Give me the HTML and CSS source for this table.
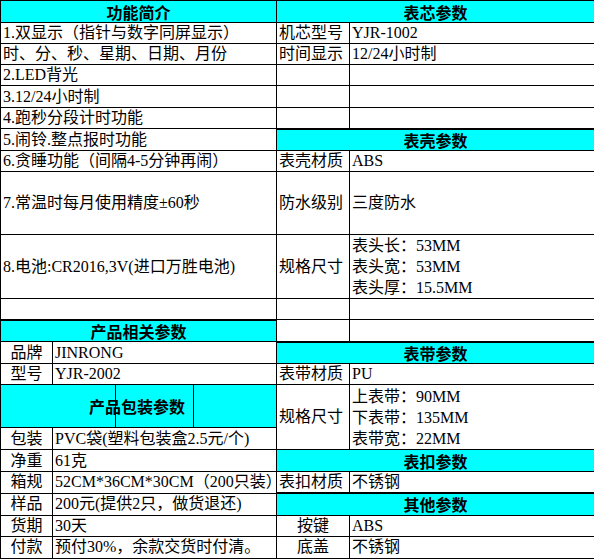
FILE: index.html
```html
<!DOCTYPE html>
<html lang="zh">
<head>
<meta charset="utf-8">
<title>产品参数</title>
<link rel="stylesheet" href="styles.css">
</head>
<body>
<table class="sheet">
  <colgroup>
    <col class="ca"><col class="cb"><col class="cc"><col class="cd"><col class="ce"><col class="cf">
  </colgroup>
  <tr class="r22"><td colspan="4" class="head">功能简介</td><td colspan="2" class="head">表芯参数</td></tr>
  <tr class="r21"><td colspan="4" class="txt">1.双显示（指针与数字同屏显示）</td><td class="lbl">机芯型号</td><td class="val">YJR-1002</td></tr>
  <tr class="r21"><td colspan="4" class="txt">时、分、秒、星期、日期、月份</td><td class="lbl">时间显示</td><td class="val">12/24小时制</td></tr>
  <tr class="r21"><td colspan="4" class="txt">2.LED背光</td><td></td><td></td></tr>
  <tr class="r22"><td colspan="4" class="txt">3.12/24小时制</td><td></td><td></td></tr>
  <tr class="r21"><td colspan="4" class="txt">4.跑秒分段计时功能</td><td></td><td></td></tr>
  <tr class="r22"><td colspan="4" class="txt">5.闹铃.整点报时功能</td><td colspan="2" class="head thick">表壳参数</td></tr>
  <tr class="r21"><td colspan="4" class="txt">6.贪睡功能（间隔4-5分钟再闹）</td><td class="lbl">表壳材质</td><td class="val">ABS</td></tr>
  <tr class="r21"><td colspan="4" rowspan="3" class="txt">7.常温时每月使用精度±60秒</td><td rowspan="3" class="lbl">防水级别</td><td rowspan="3" class="val">三度防水</td></tr>
  <tr class="r21"></tr>
  <tr class="r21"></tr>
  <tr class="r21"><td colspan="4" rowspan="3" class="txt">8.电池:CR2016,3V(进口万胜电池)</td><td rowspan="3" class="lbl">规格尺寸</td><td rowspan="3" class="val multi">表头长：53MM<br>表头宽：53MM<br>表头厚：15.5MM</td></tr>
  <tr class="r21"></tr>
  <tr class="r22"></tr>
  <tr class="r21"><td colspan="4"></td><td></td><td></td></tr>
  <tr class="r22"><td colspan="4" class="head thick">产品相关参数</td><td></td><td></td></tr>
  <tr class="r22"><td class="lbl center">品牌</td><td colspan="3" class="val">JINRONG</td><td colspan="2" class="head thick">表带参数</td></tr>
  <tr class="r21"><td class="lbl center">型号</td><td colspan="3" class="val">YJR-2002</td><td class="lbl">表带材质</td><td class="val">PU</td></tr>
  <tr class="r21"><td colspan="2" rowspan="2" class="head over">产品包装参数</td><td rowspan="2" class="head"></td><td rowspan="2" class="head"></td><td rowspan="3" class="lbl">规格尺寸</td><td rowspan="3" class="val multi">上表带：90MM<br>下表带：135MM<br>表带宽：22MM</td></tr>
  <tr class="r22"></tr>
  <tr class="r22"><td class="lbl center">包装</td><td colspan="3" class="val">PVC袋(塑料包装盒2.5元/个)</td></tr>
  <tr class="r22"><td class="lbl center">净重</td><td colspan="3" class="val">61克</td><td colspan="2" class="head">表扣参数</td></tr>
  <tr class="r21"><td class="lbl center">箱规</td><td colspan="3" class="val">52CM*36CM*30CM（200只装）</td><td class="lbl">表扣材质</td><td class="val">不锈钢</td></tr>
  <tr class="r22"><td class="lbl center">样品</td><td colspan="3" class="val">200元(提供2只，做货退还)</td><td colspan="2" class="head thick">其他参数</td></tr>
  <tr class="r21"><td class="lbl center">货期</td><td colspan="3" class="val">30天</td><td class="lbl center">按键</td><td class="val">ABS</td></tr>
  <tr class="r22"><td class="lbl center">付款</td><td colspan="3" class="val">预付30%，余款交货时付清。</td><td class="lbl center">底盖</td><td class="val">不锈钢</td></tr>
  <tr class="r22"><td colspan="4" class="head"></td><td colspan="2" class="head"></td></tr>
</table>
</body>
</html>
```
FILE: styles.css
```css
html, body {
  margin: 0;
  padding: 0;
  background: #ffffff;
}

body {
  font-family: "Liberation Serif", "Noto Sans CJK SC", serif;
  font-size: 16px;
  color: #000000;
  overflow: hidden;
}

.sheet {
  border-collapse: collapse;
  table-layout: fixed;
  width: 594px;
}

.ca { width: 52px; }
.cb { width: 63px; }
.cc { width: 78px; }
.cd { width: 83px; }
.ce { width: 73px; }
.cf { width: 245px; }

.r21 { height: 21px; }
.r22 { height: 22px; }

.sheet td {
  border: 1px solid #000000;
  padding: 0 0 0 2px;
  line-height: 20px;
  white-space: nowrap;
  overflow: visible;
  vertical-align: middle;
  text-align: left;
}

.sheet td.head {
  background: #00ffff;
  font-family: "Noto Sans CJK SC", sans-serif;
  font-weight: bold;
  text-align: center;
  padding: 0;
}

.sheet td.thick {
  border-top: 2px solid #000000;
}

.sheet td.over {
  text-align: left;
  padding-left: 88px;
}

.sheet td.center {
  text-align: center;
  padding: 0;
}

.sheet td.multi {
  line-height: 21px;
}
```
